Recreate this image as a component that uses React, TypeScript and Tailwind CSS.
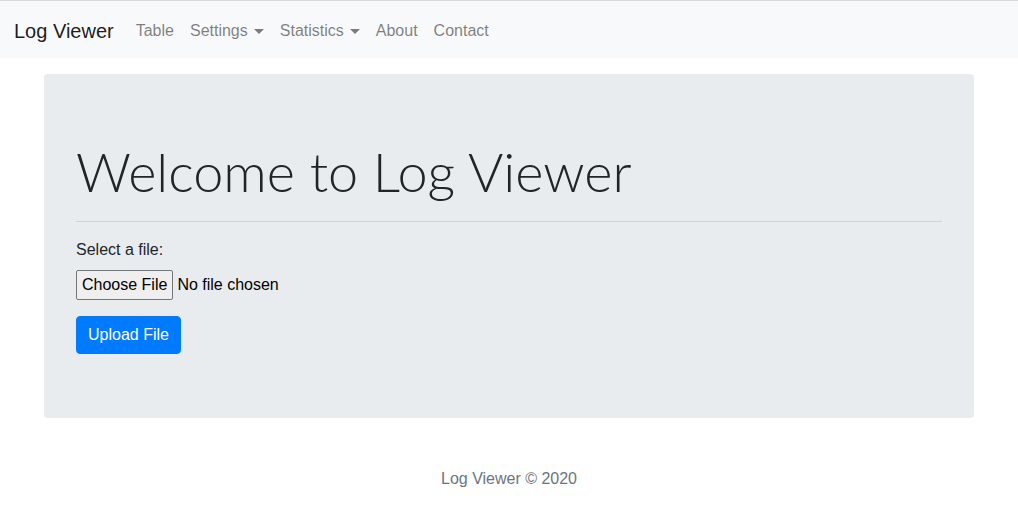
export default function App() {
  const font = { fontFamily: '"Liberation Sans", Arial, sans-serif' };
  return (
    <div className="min-h-screen bg-white text-[#212529]" style={font}>
      <nav className="flex items-center border-t border-[#d9d9d9] bg-[#f8f9fa] px-[14px] pb-[7px] pt-[10px]">
        <a className="mr-[14px] py-[5px] text-[20px] leading-[30px] text-black/90">Log Viewer</a>
        <ul className="flex items-center text-[16px] leading-6 text-black/50">
          <li className="px-2 py-2">Table</li>
          <li className="flex items-center px-2 py-2">
            Settings
            <span className="ml-[6px] h-0 w-0 border-x-[5px] border-t-[5px] border-x-transparent border-t-black/50" />
          </li>
          <li className="flex items-center px-2 py-2">
            Statistics
            <span className="ml-[6px] h-0 w-0 border-x-[5px] border-t-[5px] border-x-transparent border-t-black/50" />
          </li>
          <li className="px-2 py-2">About</li>
          <li className="px-2 py-2">Contact</li>
        </ul>
      </nav>

      <main className="mx-auto mt-4 w-[960px] px-[15px]">
        <div className="rounded bg-[#e9ecef] px-8 py-16">
          <h1
            className="text-[54px] font-light leading-[67px] text-[#212529]"
            style={{ fontFamily: 'Lato, "Open Sans", sans-serif' }}
          >
            Welcome to Log Viewer
          </h1>
          <hr className="my-4 border-t border-black/10" />
          <label className="mb-2 block text-[16px] leading-6">Select a file:</label>
          <div className="flex items-center text-[16px]">
            <span className="rounded-[2px] border border-[#767676] bg-[#efefef] px-[5px] py-[2px] leading-6 text-black">
              Choose File
            </span>
            <span className="ml-[4px] text-black">No file chosen</span>
          </div>
          <button className="mt-4 rounded border border-[#007bff] bg-[#007bff] px-[11px] py-[6px] text-[16px] leading-6 text-white">
            Upload File
          </button>
        </div>
      </main>

      <footer className="mt-[49px] text-center text-[16px] leading-6 text-[#6c757d]">
        Log Viewer © 2020
      </footer>
    </div>
  );
}
